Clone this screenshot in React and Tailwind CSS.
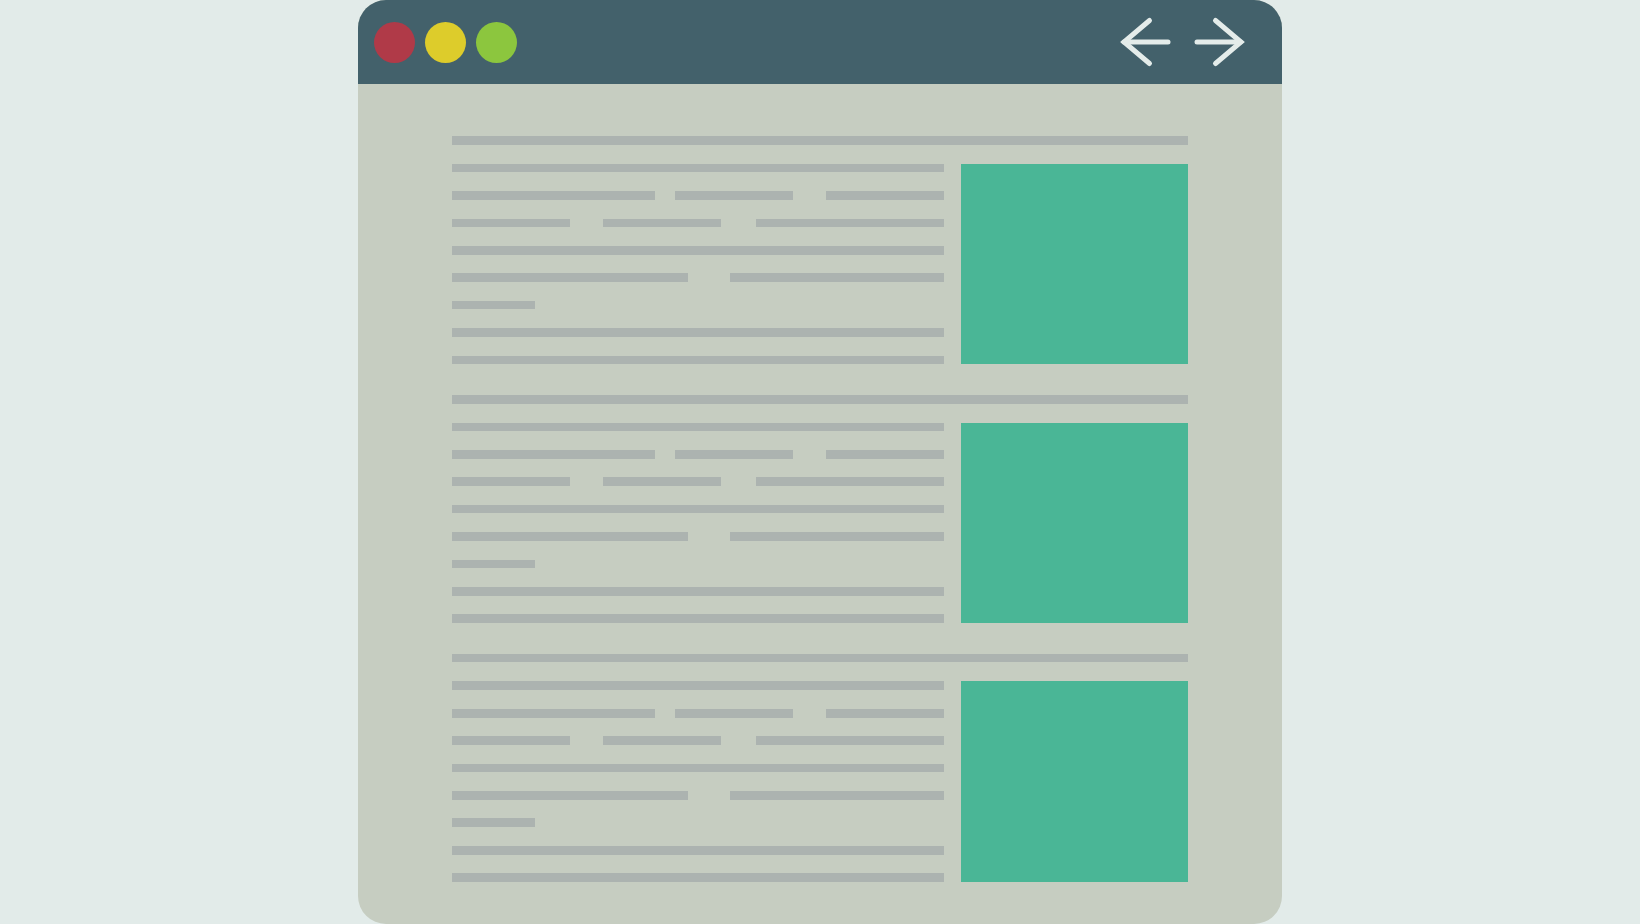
import React from "react";

function Section() {
  return (
    <div className="flex flex-col">
      <div className="h-[8.7px] w-full bg-[#acb3b0]" />
      <div className="mt-[19px] flex h-[200.6px] gap-[17px]">
        <div className="flex w-[492px] flex-col justify-between">
          <div className="h-[8.7px] w-full bg-[#acb3b0]" />
          <div className="flex h-[8.7px] justify-between">
            <div className="h-full w-[203px] bg-[#acb3b0]" />
            <div className="ml-[20px] h-full w-[118px] bg-[#acb3b0]" />
            <div className="ml-auto h-full w-[118px] bg-[#acb3b0]" />
          </div>
          <div className="flex h-[8.7px]">
            <div className="h-full w-[118px] bg-[#acb3b0]" />
            <div className="ml-[33px] h-full w-[118px] bg-[#acb3b0]" />
            <div className="ml-auto h-full w-[188px] bg-[#acb3b0]" />
          </div>
          <div className="h-[8.7px] w-full bg-[#acb3b0]" />
          <div className="flex h-[8.7px]">
            <div className="h-full w-[236px] bg-[#acb3b0]" />
            <div className="ml-auto h-full w-[214px] bg-[#acb3b0]" />
          </div>
          <div className="h-[8.7px] w-[83px] bg-[#acb3b0]" />
          <div className="h-[8.7px] w-full bg-[#acb3b0]" />
          <div className="h-[8.7px] w-full bg-[#acb3b0]" />
        </div>
        <div className="h-full w-[227px] bg-[#4ab696]" />
      </div>
    </div>
  );
}

export default function App() {
  return (
    <div className="flex h-[924px] w-[1640px] justify-center bg-[#e2ebe9]">
      <div className="flex h-[924px] w-[924px] flex-col overflow-hidden rounded-[28px] bg-[#c6cdc1]">
        <div className="flex h-[84px] shrink-0 items-center bg-[#43616b] pl-4 pr-8">
          <div className="flex gap-[10px]">
            <div className="h-[41px] w-[41px] rounded-full bg-[#b03a48]" />
            <div className="h-[41px] w-[41px] rounded-full bg-[#ddcc2b]" />
            <div className="h-[41px] w-[41px] rounded-full bg-[#8cc63e]" />
          </div>
          <svg
            className="ml-auto"
            width="135"
            height="56"
            viewBox="0 0 135 56"
            fill="none"
            stroke="#e4ecea"
            strokeWidth="5"
            strokeLinecap="round"
          >
            <path d="M34.5 6.5 L9 28 L34.5 49.5" strokeLinejoin="miter" />
            <path d="M9 28 L53 28" />
            <path d="M82 28 L125.5 28" />
            <path d="M100.5 6.5 L126 28 L100.5 49.5" strokeLinejoin="miter" />
          </svg>
        </div>
        <div className="flex flex-col gap-[30.6px] px-[94px] pt-[52px]">
          <Section />
          <Section />
          <Section />
        </div>
      </div>
    </div>
  );
}
